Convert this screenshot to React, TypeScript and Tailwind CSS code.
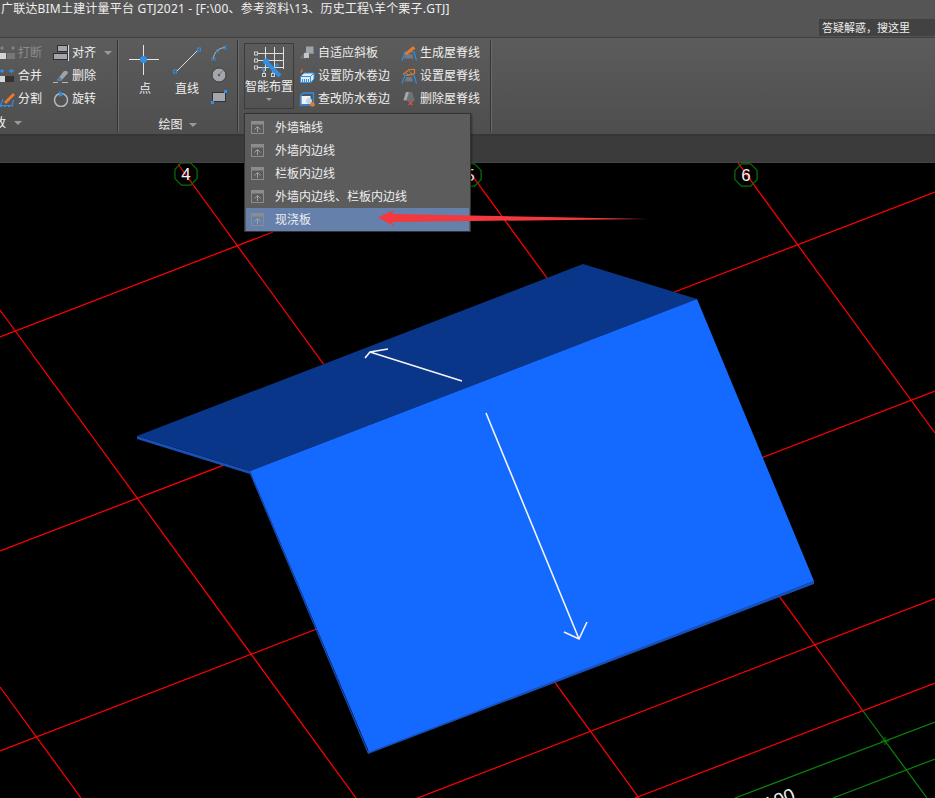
import type { ReactNode } from 'react';

const BLUE = '#2f8fe6';
const ORANGE = '#e8792c';

function Ico({ children, w = 16, h = 16 }: { children: ReactNode; w?: number; h?: number }) {
  return (
    <svg width={w} height={h} viewBox={`0 0 ${w} ${h}`} fill="none" className="shrink-0">
      {children}
    </svg>
  );
}

function Triangle() {
  return <span className="inline-block border-x-[4px] border-t-[4px] border-x-transparent border-t-[#9a9a9a]" />;
}

function Tool({ icon, label, muted, caret }: { icon: ReactNode; label: string; muted?: boolean; caret?: boolean }) {
  return (
    <div className="flex h-[23px] items-center gap-[3px]">
      {icon}
      <span className={`text-xs whitespace-nowrap ${muted ? 'text-[#8c8c8c]' : 'text-[#eeeeee]'}`}>{label}</span>
      {caret && <span className="ml-[5px] flex"><Triangle /></span>}
    </div>
  );
}

function Sep() {
  return <div className="mt-[2px] h-[92px] w-[2px] shrink-0 border-l border-l-[#343434] border-r border-r-[#6a6a6a]" />;
}

const BreakIcon = (
  <Ico w={15}>
    <path d="M0 3h4M2 1v4M11 3h4M13 1v4" stroke="#8d8d8d" />
    <rect x="0" y="8" width="6" height="6" fill="#d5d5d5" />
    <rect x="7" y="8" width="8" height="6" fill="#777" />
  </Ico>
);
const MergeIcon = (
  <Ico w={15}>
    <path d="M0 3h4M2 1v4M9 3h5M11.5 1v4" stroke={BLUE} strokeWidth="1.3" />
    <rect x="0" y="8" width="5" height="6" fill="#d5d5d5" />
    <rect x="5" y="8" width="9" height="6" fill="#333" />
  </Ico>
);
const SplitIcon = (
  <Ico w={15}>
    <path d="M3 8 0.5 14.5H12L13.5 9" stroke={BLUE} strokeWidth="1.2" />
    <path d="M5 12 14 3" stroke={ORANGE} strokeWidth="3" />
    <path d="M0 15.5h13" stroke={BLUE} strokeDasharray="2 2" />
  </Ico>
);
const AlignIcon = (
  <Ico>
    <rect x="4.5" y="0.5" width="10" height="6" fill="#a3a7ad" stroke="#2f2f2f" />
    <rect x="0.5" y="8.5" width="14" height="6" fill="#a3a7ad" stroke="#2f2f2f" />
    <path d="M15.5 0v16" stroke="#dcdcdc" />
  </Ico>
);
const EraseIcon = (
  <Ico>
    <path d="M4 12 11 3h3l1 2-7 8H5z" fill="#9ea3aa" />
    <path d="M4 12 6.5 9l2.5 2-1.5 2H5z" fill="#4a7fb5" />
    <path d="M0 14.5h5M9 14.5h6" stroke="#b8b8b8" />
  </Ico>
);
const RotateIcon = (
  <Ico>
    <circle cx="8" cy="9" r="6.5" stroke="#b5b5b5" strokeWidth="1.5" />
    <path d="M6 0v6l5-2.6z" fill={BLUE} />
  </Ico>
);
const SlopeIcon = (
  <Ico>
    <path d="M7 1.5h7.5V9L7 8z" fill="#9fa4ab" />
    <path d="M1 13 7 6v7.5H1z" fill="#6f7378" />
    <path d="M5 8h5v5H5z" fill="#c3c5c8" />
  </Ico>
);
const RollIcon = (
  <Ico>
    <path d="M3 1v3H1" stroke={ORANGE} />
    <path d="M1.5 8.5 5 5h10v6l-3 3.5H1.5z" fill="#e8eaec" stroke={BLUE} />
    <path d="M11.5 8.5V14M11.5 8.5 15 5M1.5 8.5h10" stroke={BLUE} />
    <path d="M3.5 11v3M5.5 11v3M7.5 11v3M9.5 11v3" stroke={BLUE} />
  </Ico>
);
const CheckIcon = (
  <Ico>
    <path d="M1.5 4.5 4 2h10.5v9l-3 3h-10z" fill="#4c5660" stroke={BLUE} strokeWidth="1.3" />
    <rect x="2.5" y="5" width="9" height="8" fill="#f1f2f4" />
    <circle cx="10" cy="10" r="3" fill="#c3d4e6" />
    <circle cx="13.5" cy="13.5" r="2.3" fill={ORANGE} />
  </Ico>
);
const RidgeIcon = (
  <Ico>
    <path d="M1 15.5 4 7h9l2.5 8.5" stroke={BLUE} strokeWidth="1.2" />
    <path d="M4 9h7l1.5 4.5H3z" fill="#6f7a86" />
    <path d="M3.5 8.5 12 1l2.5 2.5L6 10z" fill={ORANGE} />
  </Ico>
);
const RidgeSetIcon = (
  <Ico>
    <path d="M1 15.5 4 7h9l2.5 8.5" stroke={BLUE} strokeWidth="1.2" />
    <path d="M2 6.5 8 1.5h5.5v4L5 7.5" stroke={ORANGE} strokeWidth="1.2" />
    <path d="M5 4.5l3 3M8 3l3 3" stroke={ORANGE} />
    <path d="M5 9h6l1 4.5H4z" fill="#6f7a86" />
  </Ico>
);
const RidgeDelIcon = (
  <Ico>
    <path d="M5 1h6l3 9H2.5z" fill="#6d7176" />
    <path d="M5 1h3L5.5 9h-3z" fill="#a4a7ab" />
    <path d="M7.5 10l4 4M11.5 10l-4 4" stroke="#d9534f" strokeWidth="1.3" />
  </Ico>
);

function SmartIcon() {
  return (
    <Ico w={30} h={33}>
      <path d="M4 7.5h26M4 14.5h26M4 21.5h26M11.5 1v24M20.5 1v24M29.5 1v22" stroke="#dedede" />
      <rect x="0.5" y="6" width="3" height="3" stroke="#cfcfcf" />
      <rect x="0.5" y="13" width="3" height="3" stroke="#cfcfcf" />
      <rect x="0.5" y="20" width="3" height="3" stroke="#cfcfcf" />
      <rect x="8.5" y="27.5" width="3" height="3" stroke="#cfcfcf" />
      <rect x="17.5" y="27.5" width="3" height="3" stroke="#cfcfcf" />
      <path d="M10 24v3M19 24v3" stroke="#cfcfcf" />
      <path d="M13 17l13 13" stroke={BLUE} strokeWidth="4" />
      <circle cx="12" cy="15.5" r="3" fill={BLUE} />
      <path d="M7 23h4M9 21v4M21 19h4M23 17v4" stroke={BLUE} />
    </Ico>
  );
}

function MenuIcon() {
  return (
    <Ico w={13} h={13}>
      <rect x="0.5" y="0.5" width="12" height="12" stroke="#8c8c8c" />
      <rect x="0" y="0" width="13" height="3.5" fill="#8c8c8c" />
      <path d="M6.5 11V6M3.5 8.5l3-3 3 3" stroke="#a0a0a0" />
    </Ico>
  );
}

function octagon(cx: number, cy: number, r: number) {
  const pts: string[] = [];
  for (let i = 0; i < 8; i++) {
    const a = ((i * 45 + 22.5) * Math.PI) / 180;
    pts.push(`${cx + r * Math.cos(a)},${cy + r * Math.sin(a)}`);
  }
  return pts.join(' ');
}

const redLines = [
  [0, 310, 356, 798],
  [0, 687, 81, 798],
  [178, 164, 639, 798],
  [463, 163, 863, 711],
  [738, 163, 935, 433],
  [0, 337, 273, 232],
  [0, 551, 935, 192],
  [0, 751, 935, 391],
  [415, 799, 935, 598.5],
  [635, 798, 935, 683],
];
const greenLines = [
  [863, 711, 927, 798],
  [735, 798, 935, 722],
  [833, 798, 935, 759],
];

function Canvas() {
  return (
    <svg viewBox="0 163 935 635" width={935} height={635} className="block bg-black">
      {redLines.map((l, i) => (
        <line key={i} x1={l[0]} y1={l[1]} x2={l[2]} y2={l[3]} stroke="#ff0000" strokeWidth="1.25" />
      ))}
      {greenLines.map((l, i) => (
        <line key={i} x1={l[0]} y1={l[1]} x2={l[2]} y2={l[3]} stroke="#0a800a" strokeWidth="1.25" />
      ))}
      <path d="M881 741h8M885 737v8" stroke="#0a800a" />
      {[[186, 174, '4'], [470, 175, '5'], [746, 175, '6']].map(([x, y, t]) => (
        <g key={t as string}>
          <polygon points={octagon(x as number, y as number, 12)} fill="none" stroke="#087008" strokeWidth="1.25" />
          <text x={x as number} y={(y as number) + 6} textAnchor="middle" fontSize="17" fill="#f2f2f2" fontFamily="Liberation Sans, sans-serif">
            {t}
          </text>
        </g>
      ))}
      <polygon points="137,436 137,439 250,474 368,754 814,584 814,581 368,751 250,471" fill="#1a4fb8" />
      <polygon points="137,436 583,264 697,299 250,471" fill="#0a368a" />
      <polygon points="250,471 697,299 814,581 369,752" fill="#1469ff" />
      <path d="M462 381 370 352M388 349 370 352 365 358M486 413 579 639M564 632 579 639 587 622" stroke="#f4f4f4" strokeWidth="1.6" fill="none" />
      <text x="757" y="815" fontSize="19" fill="#eeeeee" fontFamily="Liberation Sans, sans-serif" transform="rotate(-21 757 815)">
        3100
      </text>
    </svg>
  );
}

const menuItems = ['外墙轴线', '外墙内边线', '栏板内边线', '外墙内边线、栏板内边线', '现浇板'];

function Menu() {
  return (
    <div className="absolute left-[244px] top-[113px] z-10 flex h-[119px] w-[227px] flex-col border border-[#333333] bg-[#5c5c5c] px-[1px] pt-[2px] shadow-[1px_1px_2px_rgba(0,0,0,0.4)]">
      {menuItems.map((item, i) => (
        <div key={item} className={`flex h-[23px] items-center pl-[5px] ${i === 4 ? 'bg-[#6480ab]' : ''}`}>
          <MenuIcon />
          <span className="ml-[11px] text-xs text-[#eeeeee]">{item}</span>
        </div>
      ))}
    </div>
  );
}

export default function App() {
  return (
    <div className="relative flex h-[798px] w-[935px] flex-col overflow-hidden bg-black font-['Noto_Sans','Noto_Sans_CJK_SC',sans-serif]">
      {/* 标题栏 */}
      <div className="flex h-[38px] shrink-0 flex-col border-b border-[#3f3f3f] bg-[#555555]">
        <div className="h-[18px] pl-[1px] text-xs leading-[17px] tracking-[0.2px] whitespace-nowrap text-[#efefef]">
          广联达BIM土建计量平台 GTJ2021 - [F:\00、参考资料\13、历史工程\羊个栗子.GTJ]
        </div>
        <div className="ml-[819px] mt-[1px] h-[17px] w-[116px] bg-[#424242] pl-[3px] text-[11px] leading-[17px] whitespace-nowrap text-[#efefef]">
          答疑解惑，搜这里
        </div>
      </div>

      {/* 功能区 */}
      <div className="flex h-[98px] shrink-0 items-start border-b-2 border-[#363636] bg-gradient-to-b from-[#5c5c5c] to-[#4e4e4e]">
        <div className="flex h-full w-[117px] shrink-0 flex-col overflow-hidden">
          <div className="mt-[3px] flex">
            <div className="flex w-[53px] shrink-0 flex-col">
              <Tool icon={BreakIcon} label="打断" muted />
              <Tool icon={MergeIcon} label="合并" />
              <Tool icon={SplitIcon} label="分割" />
            </div>
            <div className="flex flex-col">
              <Tool icon={AlignIcon} label="对齐" caret />
              <Tool icon={EraseIcon} label="删除" />
              <Tool icon={RotateIcon} label="旋转" />
            </div>
          </div>
          <div className="ml-[-18px] mt-[4px] flex h-[18px] items-center gap-[8px] text-xs text-[#eeeeee]">
            <span>修改</span>
            <Triangle />
          </div>
        </div>
        <Sep />

        <div className="flex h-full w-[118px] shrink-0 flex-col">
          <div className="mt-[7px] flex h-[71px]">
            <div className="ml-[10px] flex w-[30px] flex-col items-center">
              <Ico w={30} h={30}>
                <path d="M0 14.5h30M14.5 0v30" stroke="#e4e4e4" />
                <circle cx="14.5" cy="14.5" r="3.5" fill={BLUE} />
              </Ico>
              <span className="ml-[2px] mt-[6px] text-xs text-[#eeeeee]">点</span>
            </div>
            <div className="ml-[12px] flex w-[30px] flex-col items-center">
              <Ico w={30} h={30}>
                <path d="M5 27 27 5" stroke="#dcdcdc" />
                <rect x="2.5" y="25" width="3" height="3" stroke={BLUE} />
                <rect x="26.5" y="3" width="3" height="3" stroke={BLUE} />
              </Ico>
              <span className="ml-[2px] mt-[6px] text-xs text-[#eeeeee]">直线</span>
            </div>
            <div className="ml-[10px] flex flex-col gap-[6px]">
              <Ico>
                <path d="M2.5 14C2.5 8 7 3 14 2.5" stroke="#b9b9b9" />
                <rect x="1" y="13" width="3" height="3" stroke={BLUE} strokeWidth="0.8" />
                <rect x="13" y="1" width="3" height="3" stroke={BLUE} strokeWidth="0.8" />
                <rect x="5.5" y="5" width="2" height="2" stroke={BLUE} strokeWidth="0.8" />
              </Ico>
              <Ico>
                <circle cx="8" cy="8" r="7" fill="#a3a7ad" stroke="#3a3a3a" />
                <circle cx="8" cy="8" r="1.2" fill="#555" />
                <path d="M8 8 12 3.5" stroke="#6d6d6d" />
              </Ico>
              <Ico>
                <rect x="1.5" y="3.5" width="13" height="9" fill="#a3a7ad" stroke="#333" />
                <rect x="13" y="1" width="3" height="3" fill={BLUE} />
                <rect x="0" y="12" width="3" height="3" fill={BLUE} />
              </Ico>
            </div>
          </div>
          <div className="mt-[4px] flex h-[18px] items-center justify-center gap-[6px] pr-[1px] text-xs text-[#eeeeee]">
            <span>绘图</span>
            <Triangle />
          </div>
        </div>
        <Sep />

        <div className="ml-[5px] mt-[5px] flex h-[66px] w-[50px] shrink-0 flex-col items-center border border-[#3c3c3c]">
          <div className="mt-[2px] flex">
            <SmartIcon />
          </div>
          <span className="text-xs whitespace-nowrap text-[#eeeeee]">智能布置</span>
          <span className="mt-[3px] flex">
            <span className="inline-block border-x-[3px] border-t-[3px] border-x-transparent border-t-[#9a9a9a]" />
          </span>
        </div>
        <div className="ml-[5px] mt-[3px] flex w-[102px] shrink-0 flex-col">
          <Tool icon={SlopeIcon} label="自适应斜板" />
          <Tool icon={RollIcon} label="设置防水卷边" />
          <Tool icon={CheckIcon} label="查改防水卷边" />
        </div>
        <div className="mt-[3px] flex w-[89px] shrink-0 flex-col">
          <Tool icon={RidgeIcon} label="生成屋脊线" />
          <Tool icon={RidgeSetIcon} label="设置屋脊线" />
          <Tool icon={RidgeDelIcon} label="删除屋脊线" />
        </div>
        <Sep />
      </div>

      {/* 页签栏 */}
      <div className="h-[27px] shrink-0 border-b border-[#454545] bg-[#3b3b3b]" />

      <Canvas />
      <Menu />

      {/* 标注箭头 */}
      <svg className="absolute left-0 top-0 z-20" width={935} height={798} viewBox="0 0 935 798">
        <polygon points="378,217.5 394,210 392,214 648,219 392,222 394,226" fill="#f3393e" />
      </svg>
    </div>
  );
}
